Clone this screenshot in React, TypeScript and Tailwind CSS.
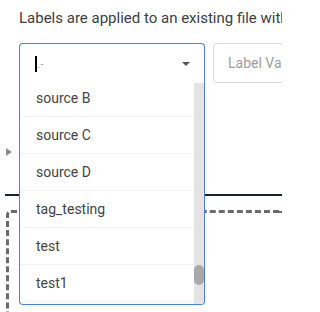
import React from "react";

const items = ["source B", "source C", "source D", "tag_testing", "test", "test1", ""];

export default function App() {
  return (
    <div
      className="relative w-[282px] h-[312px] overflow-hidden bg-white"
      style={{ fontFamily: "Roboto, 'Liberation Sans', sans-serif" }}
    >
      <p className="pl-[19px] pt-[10px] text-[15px] leading-[17px] text-[#3c4043] whitespace-nowrap">
        Labels are applied to an existing file with
      </p>
      <div className="flex gap-[8px] pl-[19px] mt-[16px]">
        <div className="relative w-[186px] h-[40px] shrink-0 z-10">
          <div className="h-[40px] border-t border-x border-[#4a80e6] rounded-t-[4px] bg-white flex items-center pl-[15px] pr-[14px]">
            <span className="w-[1.5px] h-[16px] bg-black" />
            <span className="ml-[1px] mt-[2px] text-[11px] text-[#9a9a9a] leading-none">.-</span>
            <span className="ml-auto w-0 h-0 border-l-[4px] border-r-[4px] border-t-[4px] border-l-transparent border-r-transparent border-t-[#555]" />
          </div>
          <div className="absolute top-[40px] left-0 w-[186px] h-[222px] border-x border-b border-[#4a80e6] rounded-b-[4px] bg-white overflow-hidden flex">
            <div className="flex-1 overflow-hidden">
              <div className="-mt-[3px]">
                {items.map((it, i) => (
                  <div
                    key={i}
                    className="h-[37px] border-b border-[#f2f2f2] flex items-center pl-[16px] text-[14px] text-[#444]"
                  >
                    {it}
                  </div>
                ))}
              </div>
            </div>
            <div className="relative w-[10px] bg-[#e3e3e3]">
              <div className="absolute left-0 top-[182px] w-[10px] h-[20px] rounded-full bg-[#a9a9a9]" />
            </div>
          </div>
        </div>
        <div className="h-[40px] w-[120px] shrink-0 border border-[#dcdcdc] rounded-[4px] flex items-center pl-[14px] text-[14px] text-[#9e9e9e] whitespace-nowrap">
          Label Value
        </div>
      </div>
      <div className="ml-[6px] mt-[65px] w-0 h-0 border-t-[4.5px] border-b-[4.5px] border-l-[6px] border-t-transparent border-b-transparent border-l-[#8a8a8a]" />
      <div className="ml-[5px] mt-[38px] h-[2px] bg-[#18212e]" />
      <div className="ml-[6px] mt-[14px] h-[120px] border-t-[3px] border-l-[3px] border-dashed border-[#6b6b6b] rounded-tl-[5px]" />
    </div>
  );
}
